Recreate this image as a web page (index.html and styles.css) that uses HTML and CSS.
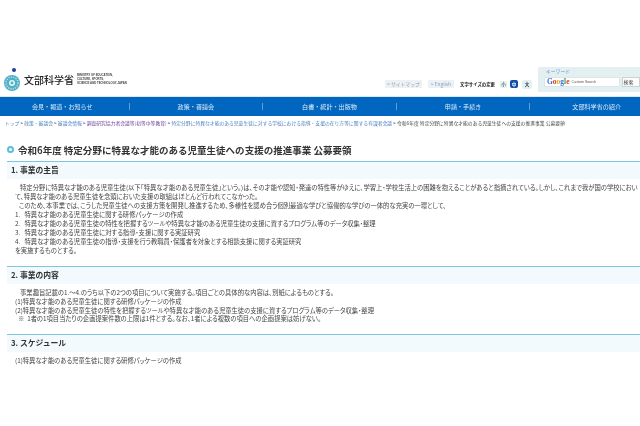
FILE: index.html
```html
<!DOCTYPE html>
<html lang="ja">
<head>
<meta charset="utf-8">
<title>令和6年度 公募要領</title>
<link rel="stylesheet" href="styles.css">
</head>
<body>
<header class="header">
  <div class="logo">
    <svg class="mark" width="20" height="26" viewBox="0 0 20 26">
      <circle cx="12" cy="3" r="2" fill="#1f3f94"/>
      <circle cx="10" cy="16" r="8" fill="#4fb0c6"/>
      <circle cx="10" cy="16" r="6" fill="none" stroke="#bfe3ea" stroke-width="1.4" stroke-dasharray="1.2 1.2"/>
      <circle cx="10" cy="16" r="3" fill="#e6f6f8"/>
      <circle cx="10" cy="16" r="1.4" fill="#4fb0c6"/>
    </svg>
    <span class="logo-ja">文部科学省</span>
    <span class="logo-en">MINISTRY OF EDUCATION,<br>CULTURE, SPORTS,<br>SCIENCE AND TECHNOLOGY-JAPAN</span>
  </div>
  <div class="tools">
    <a class="tool tool-map">&gt; サイトマップ</a>
    <a class="tool tool-en">&gt; English</a>
    <span class="size-label">文字サイズの変更</span>
    <span class="size size-s">小</span>
    <span class="size size-m">中</span>
    <span class="size size-l">大</span>
  </div>
  <div class="search">
    <div class="search-label">キーワード</div>
    <div class="search-row">
      <div class="search-input"><span class="g-b">G</span><span class="g-r">o</span><span class="g-y">o</span><span class="g-b">g</span><span class="g-g">l</span><span class="g-r">e</span><span class="cse">Custom Search</span></div>
      <div class="search-btn">検索</div>
    </div>
  </div>
</header>
<nav class="nav">
  <a class="nav-item">会見・報道・お知らせ</a>
  <a class="nav-item">政策・審議会</a>
  <a class="nav-item">白書・統計・出版物</a>
  <a class="nav-item">申請・手続き</a>
  <a class="nav-item">文部科学省の紹介</a>
</nav>
<div class="crumbs"><a class="link">トップ</a> &gt; <a class="link">政策・審議会</a> &gt; <a class="link">審議会情報</a> &gt; <a class="visited">調査研究協力者会議等(初等中等教育)</a> &gt; <a class="link">特定分野に特異な才能のある児童生徒に対する学校における指導・支援の在り方等に関する有識者会議</a> &gt; 令和6年度 特定分野に特異な才能のある児童生徒への支援の推進事業 公募要領</div>
<main class="main">
  <h1 class="title"><span class="bullet"></span>令和6年度 特定分野に特異な才能のある児童生徒への支援の推進事業 公募要領</h1>
  <h2 class="section">1. 事業の主旨</h2>
  <div class="body">
    <p class="indent">特定分野に特異な才能のある児童生徒(以下「特異な才能のある児童生徒」という。)は、その才能や認知・発達の特性等がゆえに、学習上・学校生活上の困難を抱えることがあると指摘されている。しかし、これまで我が国の学校におい</p>
    <p>て、特異な才能のある児童生徒を念頭においた支援の取組はほとんど行われてこなかった。</p>
    <p class="indent2">このため、本事業では、こうした児童生徒への支援方策を開発し推進するため、多様性を認め合う個別最適な学びと協働的な学びの一体的な充実の一環として、</p>
    <p>1. &nbsp;&nbsp;特異な才能のある児童生徒に関する研修パッケージの作成</p>
    <p>2. &nbsp;&nbsp;特異な才能のある児童生徒の特性を把握するツールや特異な才能のある児童生徒の支援に資するプログラム等のデータ収集・整理</p>
    <p>3. &nbsp;&nbsp;特異な才能のある児童生徒に対する指導・支援に関する実証研究</p>
    <p>4. &nbsp;&nbsp;特異な才能のある児童生徒の指導・支援を行う教職員・保護者を対象とする相談支援に関する実証研究</p>
    <p>を実施するものとする。</p>
  </div>
  <h2 class="section">2. 事業の内容</h2>
  <div class="body">
    <p class="indent">事業趣旨記載の1.～4.のうち以下の2つの項目について実施する。項目ごとの具体的な内容は、別紙によるものとする。</p>
    <p>(1)特異な才能のある児童生徒に関する研修パッケージの作成</p>
    <p>(2)特異な才能のある児童生徒の特性を把握するツールや特異な才能のある児童生徒の支援に資するプログラム等のデータ収集・整理</p>
    <p class="note">※ &nbsp;1者の1項目当たりの企画提案件数の上限は1件とする。なお、1者による複数の項目への企画提案は妨げない。</p>
  </div>
  <h2 class="section">3. スケジュール</h2>
  <div class="body">
    <p>(1)特異な才能のある児童生徒に関する研修パッケージの作成</p>
  </div>
</main>
</body>
</html>
```
FILE: styles.css
```css
* { box-sizing: border-box; margin: 0; padding: 0; }
html, body { width: 640px; height: 426px; overflow: hidden; background: #fff; }
body { font-family: "Liberation Sans", "Noto Sans CJK JP", sans-serif; color: #444; filter: blur(0.25px); }

.header { height: 97px; display: flex; align-items: flex-end; border-bottom: 1px solid #dbe9f5; width: 660px; }
.logo { display: flex; align-items: center; padding: 0 0 4px 2px; width: 384px; height: 28px; }
.mark { flex: none; }
.logo-ja { font-family: "Noto Sans CJK JP", sans-serif; font-size: 10px; font-weight: 500; color: #222; margin-left: 2px; line-height: 14px; white-space: nowrap; }
.logo-en { font-size: 2.8px; line-height: 3.7px; font-weight: 700; color: #444; margin-left: 3px; white-space: nowrap; }

.tools { display: flex; align-items: center; height: 10px; margin-bottom: 7px; width: 154px; flex: none; white-space: nowrap; }
.tool { font-size: 4.8px; color: #8aa0b5; background: #eef1f4; height: 8px; line-height: 8px; text-align: center; font-family: "Noto Sans CJK JP", sans-serif; }
.tool-map { width: 37px; margin-left: 1px; }
.tool-en { width: 26px; margin-left: 6px; color: #7d9fc4; }
.size-label { font-size: 4.4px; font-weight: 700; color: #222; margin-left: 6px; width: 36px; font-family: "Noto Sans CJK JP", sans-serif; }
.size { font-size: 4.6px; font-weight: 700; text-align: center; font-family: "Noto Sans CJK JP", sans-serif; border-radius: 2px; }
.size-s { width: 7px; height: 7px; line-height: 7px; background: #e3f0f2; color: #6a7a80; margin-left: 4px; }
.size-m { width: 8px; height: 8px; line-height: 8px; background: #0f4ea8; color: #fff; margin-left: 3px; }
.size-l { width: 10px; height: 9px; line-height: 9px; background: #e3f0f2; color: #333; margin-left: 4px; }

.search { width: 102px; height: 25px; flex: none; background: #e3eff0; margin-bottom: 4px; padding: 0 0 0 6px; }
.search-label { font-size: 4.8px; line-height: 7px; margin-bottom: 3px; color: #5f9bc7; padding-left: 2px; font-family: "Noto Sans CJK JP", sans-serif; }
.search-row { display: flex; gap: 2px; }
.search-input { width: 83px; height: 10px; background: #fff; border: 1px solid #dde5e6; line-height: 8px; padding-left: 2px; font-family: "Liberation Serif", serif; font-size: 7.5px; font-weight: 700; white-space: nowrap; }
.g-b { color: #3b6fd4; }
.g-r { color: #d33b2c; }
.g-y { color: #e3a81c; }
.g-g { color: #3a9a46; }
.cse { font-family: "Liberation Sans", sans-serif; font-size: 3.6px; font-weight: 400; color: #555; margin-left: 2px; vertical-align: 1px; }
.search-btn { width: 20px; height: 10px; background: #fdfdfd; border: 1px solid #c9d2d4; font-size: 4.8px; line-height: 8px; padding-left: 1px; color: #333; font-family: "Noto Sans CJK JP", sans-serif; }

.nav { display: flex; height: 19px; width: 667px; margin-left: -4px; background: #0066c0; align-items: center; }
.nav-item { flex: 1 1 0; height: 7px; display: flex; align-items: center; justify-content: center; font-size: 6.1px; font-family: "Noto Sans CJK JP", sans-serif; color: #dcebf7; border-right: 1px solid #5f9fd8; white-space: nowrap; }
.nav-item:last-child { border-right: 0; }

.crumbs { height: 12px; line-height: 13px; padding-left: 5px; font-size: 4.81px; color: #444; white-space: nowrap; font-family: "Noto Sans CJK JP", sans-serif; }
.link { color: #4a7fc4; }
.visited { color: #6a3fa0; }

.main { padding-left: 7px; width: 660px; }
.title { height: 33px; padding-top: 10px; font-size: 9.53px; line-height: 14px; font-weight: 700; color: #333; display: flex; align-items: center; white-space: nowrap; font-family: "Noto Sans CJK JP", sans-serif; }
.bullet { flex: none; width: 7px; height: 7px; border-radius: 50%; border: 2px solid #5bbce0; background: #fff; margin-right: 4px; }
.section { height: 18px; border-top: 1.5px solid #7cc6de; background: #f3fafd; padding-left: 4px; font-size: 7.8px; line-height: 16px; font-weight: 700; color: #333; font-family: "Noto Sans CJK JP", sans-serif; }
.body { padding: 5px 0 10px 8px; font-size: 6.32px; line-height: 8.95px; color: #444; white-space: nowrap; font-family: "Noto Sans CJK JP", sans-serif; font-feature-settings: "palt"; }
.body:last-child { padding-bottom: 0; }
.indent { padding-left: 5px; }
.indent2 { padding-left: 4px; }
.note { padding-left: 3px; }
```
